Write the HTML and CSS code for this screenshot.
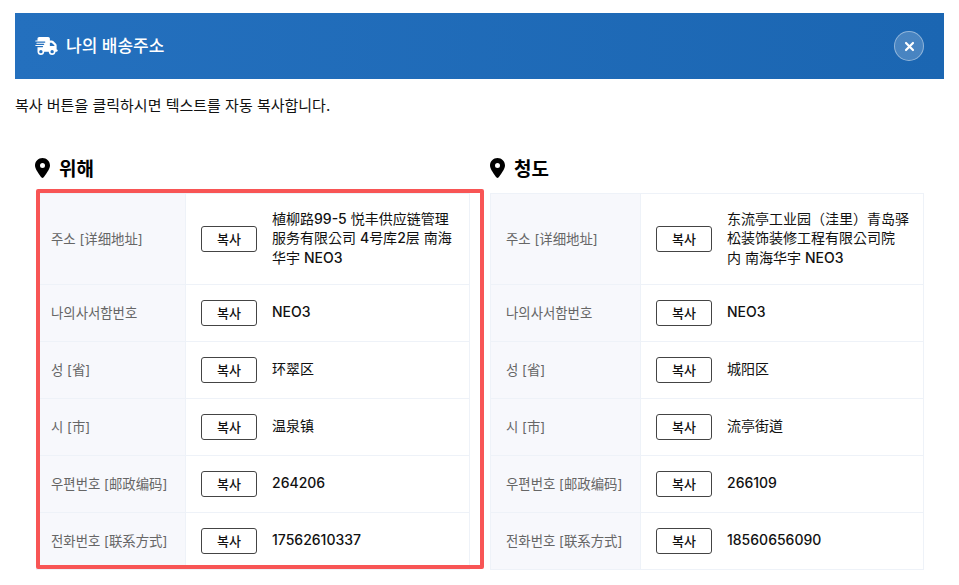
FILE: index.html
```html
<!DOCTYPE html>
<html lang="ko">
<head>
<meta charset="utf-8">
<title>나의 배송주소</title>
<link rel="stylesheet" href="styles.css">
</head>
<body>
<div class="page">
  <header class="head">
    <h1 class="head-title">
      <svg class="truck" viewBox="0 0 640 512" aria-hidden="true"><path fill="currentColor" d="M112 0C85.5 0 64 21.5 64 48V96H16c-8.8 0-16 7.2-16 16s7.2 16 16 16H64 272c8.8 0 16 7.2 16 16s-7.2 16-16 16H64 48c-8.8 0-16 7.2-16 16s7.2 16 16 16H64 240c8.8 0 16 7.2 16 16s-7.2 16-16 16H64 16c-8.8 0-16 7.2-16 16s7.2 16 16 16H64 208c8.8 0 16 7.2 16 16s-7.2 16-16 16H64V416c0 53 43 96 96 96s96-43 96-96H384c0 53 43 96 96 96s96-43 96-96h32c17.7 0 32-14.3 32-32s-14.3-32-32-32V288 256 237.3c0-17-6.7-33.3-18.7-45.3L512 114.7c-12-12-28.3-18.7-45.3-18.7H416V48c0-26.5-21.5-48-48-48H112zM544 237.3V256H416V160h50.7L544 237.3zM160 368a48 48 0 1 1 0 96 48 48 0 1 1 0-96zm272 48a48 48 0 1 1 96 0 48 48 0 1 1 -96 0z"/></svg>
      <span class="head-text">나의 배송주소</span>
    </h1>
    <button class="close" type="button" aria-label="닫기">
      <svg viewBox="0 0 12 12" aria-hidden="true"><path d="M2.2 2.2l7.6 7.6M9.8 2.2l-7.6 7.6" stroke="currentColor" stroke-width="2.4" stroke-linecap="round" fill="none"/></svg>
    </button>
  </header>
  <p class="intro">복사 버튼을 클릭하시면 텍스트를 자동 복사합니다.</p>
  <div class="cols">
    <section class="col col-left">
      <h2 class="col-title"><svg class="pin" viewBox="0 0 384 512" aria-hidden="true"><path fill="currentColor" d="M215.7 499.2C267 435 384 279.4 384 192C384 86 298 0 192 0S0 86 0 192c0 87.4 117 243 168.3 307.2c12.3 15.3 35.1 15.3 47.4 0zM192 128a64 64 0 1 1 0 128 64 64 0 1 1 0-128z"/></svg><span>위해</span></h2>
      <div class="card">
        <div class="row row-tall"><div class="label">주소 [详细地址]</div><div class="value"><button class="copy" type="button">복사</button><div class="text">植柳路<b>99-5</b> 悦丰供应链管理服务有限公司 <b>4</b>号库<b>2</b>层 南海华宇 <b>NEO3</b></div></div></div>
        <div class="row"><div class="label">나의사서함번호</div><div class="value"><button class="copy" type="button">복사</button><div class="text"><b>NEO3</b></div></div></div>
        <div class="row"><div class="label">성 [省]</div><div class="value"><button class="copy" type="button">복사</button><div class="text">环翠区</div></div></div>
        <div class="row"><div class="label">시 [市]</div><div class="value"><button class="copy" type="button">복사</button><div class="text">温泉镇</div></div></div>
        <div class="row"><div class="label">우편번호 [邮政编码]</div><div class="value"><button class="copy" type="button">복사</button><div class="text"><b>264206</b></div></div></div>
        <div class="row"><div class="label">전화번호 [联系方式]</div><div class="value"><button class="copy" type="button">복사</button><div class="text"><b>17562610337</b></div></div></div>
      </div>
      <div class="highlight"></div>
    </section>
    <section class="col col-right">
      <h2 class="col-title"><svg class="pin" viewBox="0 0 384 512" aria-hidden="true"><path fill="currentColor" d="M215.7 499.2C267 435 384 279.4 384 192C384 86 298 0 192 0S0 86 0 192c0 87.4 117 243 168.3 307.2c12.3 15.3 35.1 15.3 47.4 0zM192 128a64 64 0 1 1 0 128 64 64 0 1 1 0-128z"/></svg><span>청도</span></h2>
      <div class="card">
        <div class="row row-tall"><div class="label">주소 [详细地址]</div><div class="value"><button class="copy" type="button">복사</button><div class="text">东流亭工业园（洼里）青岛驿<br>松装饰装修工程有限公司院<br>内 南海华宇 <b>NEO3</b></div></div></div>
        <div class="row"><div class="label">나의사서함번호</div><div class="value"><button class="copy" type="button">복사</button><div class="text"><b>NEO3</b></div></div></div>
        <div class="row"><div class="label">성 [省]</div><div class="value"><button class="copy" type="button">복사</button><div class="text">城阳区</div></div></div>
        <div class="row"><div class="label">시 [市]</div><div class="value"><button class="copy" type="button">복사</button><div class="text">流亭街道</div></div></div>
        <div class="row"><div class="label">우편번호 [邮政编码]</div><div class="value"><button class="copy" type="button">복사</button><div class="text"><b>266109</b></div></div></div>
        <div class="row"><div class="label">전화번호 [联系方式]</div><div class="value"><button class="copy" type="button">복사</button><div class="text"><b>18560656090</b></div></div></div>
      </div>
    </section>
  </div>
</div>
</body>
</html>
```
FILE: styles.css
```css
* { box-sizing: border-box; }
html, body { margin: 0; height: 100%; overflow: hidden; background: #fff; }
body { font-family: Inter, "Noto Sans CJK KR", sans-serif; color: #111; }
.page { padding: 13px 15px 0; }
.head {
  height: 66px;
  display: flex;
  align-items: center;
  justify-content: space-between;
  padding: 0 20px;
  color: #fff;
  background: linear-gradient(90deg, #2470be, #1b66b2);
}
.head-title { display: flex; align-items: center; gap: 8px; margin: 0; font-size: 17px; font-weight: 500; }
.head-text { padding-bottom: 4px; }
.truck { width: 23px; height: 18px; }
.close {
  width: 30px; height: 30px; padding: 0;
  display: flex; align-items: center; justify-content: center;
  color: #fff;
  background: rgba(255,255,255,.2);
  border: 1px solid rgba(255,255,255,.4);
  border-radius: 50%;
}
.close svg { width: 11px; height: 11px; }
.intro { margin: 16px 0 0; font-size: 15px; line-height: 22px; color: #111; }
.cols { display: flex; gap: 20px; padding: 0 21px; margin-top: 39px; }
.col { position: relative; flex: 0 0 434px; }
.col-title {
  display: flex; align-items: center; gap: 9px;
  margin: 0 0 13px -1px; height: 24px;
  font-size: 19px; font-weight: 700; color: #000;
}
.col-title span { padding-bottom: 2px; }
.col-right .col-title { gap: 9.5px; margin-left: -.5px; }
.pin { width: 15px; height: 20px; }
.card { border: 1px solid #eef2f8; }
.row { display: flex; height: 57px; border-top: 1px solid #eef2f8; }
.row:first-child { border-top: 0; }
.row-tall { height: 90px; }
.label {
  flex: 0 0 149px;
  display: flex; align-items: center;
  padding: 0 0 2px 14px;
  font-size: 13.4px; color: #666;
  background: #f7f8fc;
  border-right: 1px solid #eef2f8;
}
.value { flex: 1; display: flex; align-items: center; gap: 15px; padding: 0 15px; min-width: 0; }
.col-right .label { flex-basis: 150px; padding-left: 15px; }
.col-right .value { padding-right: 14px; }
.copy {
  flex: 0 0 56px; height: 26px; padding: 0 0 2px;
  font: 500 13px Inter, "Noto Sans CJK KR", sans-serif; color: #111;
  background: #fff;
  border: 1px solid #444;
  border-radius: 3px;
}
.text { padding-bottom: 2px; font-size: 14px; line-height: 1.4; font-weight: 400; color: #111; word-break: break-all; }
.text b { font-weight: 500; }
.highlight {
  position: absolute; left: 0; right: -14px; top: 33px; bottom: 1px;
  border: 4px solid #f85555;
  border-radius: 2px;
  pointer-events: none;
}
```
